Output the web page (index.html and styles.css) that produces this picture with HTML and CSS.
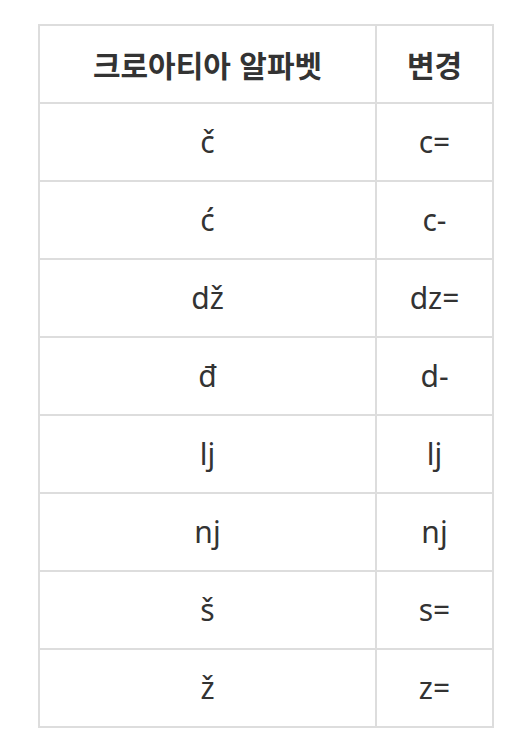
FILE: index.html
```html
<!DOCTYPE html>
<html lang="ko">
<head>
<meta charset="utf-8">
<link rel="stylesheet" href="styles.css">
</head>
<body>
<table class="alpha">
  <thead>
    <tr><th class="col-a">크로아티아 알파벳</th><th class="col-b">변경</th></tr>
  </thead>
  <tbody>
    <tr><td>č</td><td>c=</td></tr>
    <tr><td>ć</td><td>c-</td></tr>
    <tr><td>dž</td><td>dz=</td></tr>
    <tr><td>đ</td><td>d-</td></tr>
    <tr><td>lj</td><td>lj</td></tr>
    <tr><td>nj</td><td>nj</td></tr>
    <tr><td>š</td><td>s=</td></tr>
    <tr><td>ž</td><td>z=</td></tr>
  </tbody>
</table>
</body>
</html>
```
FILE: styles.css
```css
html, body {
  margin: 0;
  padding: 0;
  background: #fff;
}
body {
  padding: 24px 0 0 38px;
  font-family: "Noto Sans", "Noto Sans CJK KR", sans-serif;
  color: #333;
}
.alpha {
  border-collapse: collapse;
  width: 454px;
  table-layout: fixed;
}
.alpha th, .alpha td {
  border: 2px solid #ddd;
  height: 76px;
  padding: 0;
  text-align: center;
  vertical-align: middle;
  font-size: 30px;
  line-height: 1;
}
.alpha th {
  font-weight: 700;
  font-family: "Noto Sans CJK KR", sans-serif;
}
.col-a { width: 335px; }
.col-b { width: 115px; }
```
